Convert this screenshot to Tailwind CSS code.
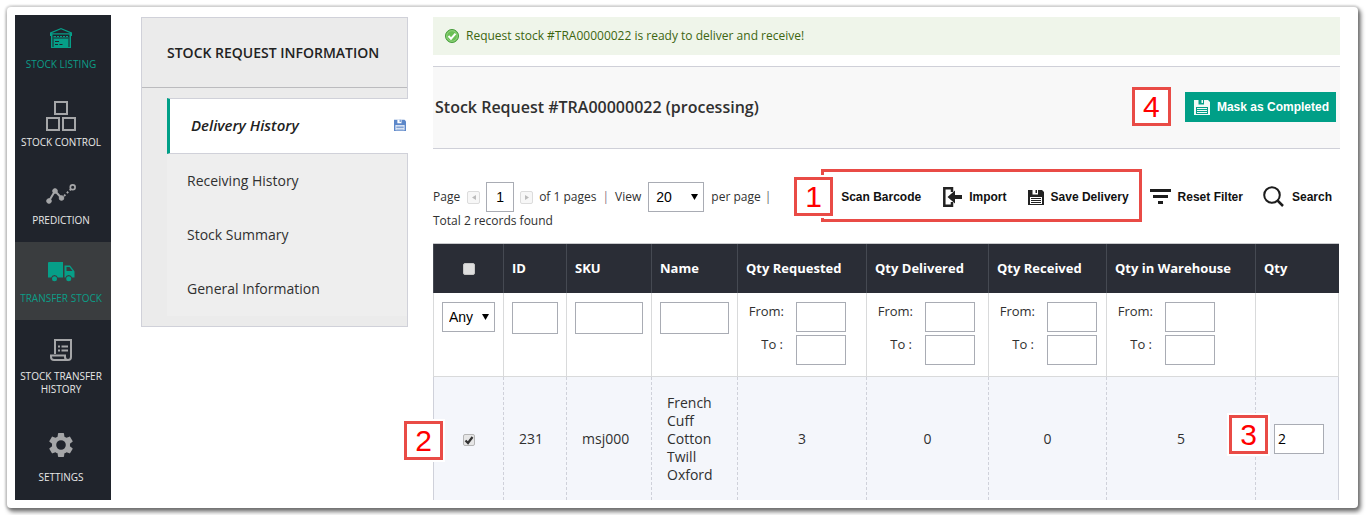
<!DOCTYPE html>
<html lang="en">
<head>
<meta charset="utf-8">
<title>Stock Request #TRA00000022</title>
<script src="https://cdn.jsdelivr.net/npm/@tailwindcss/browser@4"></script>
</head>
<body class="bg-white font-['Open_Sans',sans-serif] text-[#303030]">
<svg class="hidden">
  <symbol id="floppy" viewBox="0 0 16 16">
    <path fill="currentColor" d="M0 1h14l2 2v13H0z"/>
    <path class="text-(--paper)" fill="currentColor" d="M4.500 1H10v4.500H4.500z M2 8h12v7H2z"/>
    <path fill="currentColor" d="M7.500 1h1.500v3H7.500z M3 9h10v1H3z M3 11h10v1H3z M3 13h10v1H3z"/>
  </symbol>
</svg>
<div class="m-[7px] mr-[13px] flex rounded-[4px] bg-white p-2 shadow-[2px_3px_4px_1px_rgba(0,0,0,0.5),0_0_2px_2px_rgba(0,0,0,0.13)]">

  <nav class="w-24 shrink-0 bg-[#20242c] pr-1 text-center text-[10px] leading-[13px] text-[#e8e8e8]">
    <a href="#" class="flex h-[71px] flex-col items-center pt-[13px] text-[#0c9d87]">
      <svg class="h-5 w-[22px]" viewBox="0 0 22 20"><path fill="#069f88" d="M11 0 22 4.500V8h-1v12H1V8H0V4.500z"/><path fill="#20242c" d="M11 1.300 20.500 5.300H1.500z M2.500 6.500h17v12.500h-1V8H3.500V19h-1z"/><path stroke="#20242c" stroke-dasharray="1 2" d="M6 8.500h13"/><path stroke="#20242c" d="M3.500 10h15M5 13.500h3M5 16.500h3M9.500 16.500h3M8 13.500h1"/></svg>
      <span class="mt-[10px]">STOCK LISTING</span>
    </a>
    <a href="#" class="flex h-[78px] flex-col items-center pt-[15px]">
      <svg class="h-[30px] w-[30px]" viewBox="0 0 30 30" fill="none" stroke="#a5a6a8" stroke-width="2"><path d="M9 1h12v12H9zM1 17h12v12H1zM17 17h12v12H17z"/></svg>
      <span class="mt-[5px]">STOCK CONTROL</span>
    </a>
    <a href="#" class="flex h-[78px] flex-col items-center pt-5">
      <svg class="h-[20px] w-[30px]" viewBox="0 0 30 20" fill="#a5a6a8" stroke="#a5a6a8"><path fill="none" stroke-width="2" d="m3 17 6-10 6.500 7"/><path fill="none" stroke-width="1.800" stroke-dasharray="2 2" d="m18 12 7-7"/><circle cx="3" cy="17" r="2.300"/><circle cx="9" cy="7" r="2.300"/><circle cx="15.500" cy="14" r="2.300"/><circle cx="26.700" cy="3.300" r="2.400" fill="none" stroke-width="1.700"/></svg>
      <span class="mt-[10px]">PREDICTION</span>
    </a>
    <a href="#" class="-mr-1 flex h-[78px] flex-col items-center bg-[#3a3d3f] pt-5 pr-1 text-[#0c9d87]">
      <svg class="h-5 w-[27px]" viewBox="0 0 27 20"><path fill="#069f88" fill-rule="evenodd" d="M1 0h14v15.500H9.800a3.400 3.400 0 0 0-6.600 0H0V1a1 1 0 0 1 1-1z M16.500 3.500h5.500L25.500 8l1 1.500v6H24a3.400 3.400 0 0 0-6.600 0h-.9z M18.500 5v4h6L21.500 5z"/><circle cx="6.500" cy="16.700" r="2.500" fill="#069f88"/><circle cx="20.700" cy="16.700" r="2.500" fill="#069f88"/></svg>
      <span class="mt-[10px]">TRANSFER STOCK</span>
    </a>
    <a href="#" class="flex h-[91px] flex-col items-center pt-[19px]">
      <svg class="h-[22px] w-[22px]" viewBox="0 0 22 22" fill="none" stroke="#a5a6a8" stroke-width="2"><path d="M5 15V1h16v17a3 3 0 0 1-3 3H4a3 3 0 0 1-3-3v-1.500h14V18a3 3 0 0 0 3 3"/><path d="M8 7.500h2M11.500 7.500H18M8 11.500h2M11.500 11.500H18"/></svg>
      <span class="mt-[9px]">STOCK TRANSFER HISTORY</span>
    </a>
    <a href="#" class="flex h-[84px] flex-col items-center pt-[22px]">
      <svg class="h-6 w-6" viewBox="2 2 20 20"><path fill="#a5a6a8" d="M19.430 12.980c.04-.32.070-.64.070-.98s-.03-.66-.07-.98l2.110-1.650c.19-.15.240-.42.120-.64l-2-3.460c-.12-.22-.39-.3-.61-.22l-2.490 1c-.52-.4-1.080-.73-1.690-.98l-.38-2.650A.49.49 0 0 0 14 2h-4c-.25 0-.46.180-.49.420l-.38 2.650c-.61.250-1.170.59-1.690.98l-2.490-1c-.23-.09-.49 0-.61.220l-2 3.460c-.13.220-.07.490.12.640l2.110 1.650c-.04.320-.07.650-.07.980s.03.660.070.980l-2.110 1.650c-.19.150-.24.420-.12.640l2 3.460c.12.220.39.300.61.220l2.490-1c.52.400 1.080.73 1.690.98l.38 2.650c.03.240.24.420.49.420h4c.25 0 .46-.18.490-.42l.38-2.650c.61-.25 1.170-.59 1.690-.98l2.490 1c.23.090.49 0 .61-.22l2-3.460c.12-.22.070-.49-.12-.64zM12 16a4 4 0 1 1 0-8 4 4 0 0 1 0 8z"/></svg>
      <span class="mt-[14px]">SETTINGS</span>
    </a>
  </nav>

  <aside class="mt-[2px] ml-[30px] w-[267px] shrink-0 self-start border border-[#d0d1d9] bg-[#ebebeb] pb-[10px]">
    <h2 class="flex h-[70px] items-center border-b border-[#bbbbbe] pl-[25px] text-[14px] font-semibold whitespace-nowrap text-[#222]">STOCK REQUEST INFORMATION</h2>
    <ul class="mt-[10px] ml-[25px] bg-[#eee] text-[14px]">
      <li class="-mr-px"><a href="#" class="flex h-14 items-center justify-between border-y border-l-[3px] border-y-[#d0d1d9] border-l-[#009f87] bg-white pb-[2px] pl-[21px] text-[15px] font-semibold text-[#222] italic">Delivery History <svg class="mr-[2px] h-3 w-3 text-[#5c87c9] [--paper:#fff]"><use href="#floppy"/></svg></a></li>
      <li><a href="#" class="flex h-[54px] items-center pb-[2px] pl-5">Receiving History</a></li>
      <li><a href="#" class="flex h-[54px] items-center pb-[2px] pl-5">Stock Summary</a></li>
      <li><a href="#" class="flex h-[54px] items-center pb-[2px] pl-5">General Information</a></li>
    </ul>
  </aside>

  <main class="mt-[2px] mr-[10px] ml-[25px] min-w-0 flex-1">
    <p class="flex h-[38px] items-center bg-[#eff5ea] pl-3 text-[12px] text-[#3d6611]">
      <svg class="mr-[7px] h-[14px] w-[14px]" viewBox="0 0 14 14"><circle cx="7" cy="7" r="6.500" fill="#6abf55" stroke="#469b3b"/><circle cx="7" cy="7" r="5.300" fill="none" stroke="#9ad889" stroke-width=".8"/><path d="m3.500 7 2.500 2.700 4.500-5" fill="none" stroke="#fff" stroke-width="2"/></svg>
      Request stock #TRA00000022 is ready to deliver and receive!
    </p>

    <header class="mt-[11px] flex h-[83px] items-center border-y border-[#cfd0d8] bg-[#f8f8f8] pr-1 pb-[2px] pl-[2px]">
      <h1 class="flex-1 text-[16px] font-semibold">Stock Request #TRA00000022 (processing)</h1>
      <span class="mr-[14px] flex h-[39px] w-[39px] items-center justify-center border-3 border-[#e94b46] bg-white font-['Liberation_Sans',sans-serif] text-[30px] leading-none text-[#f00]">4</span>
      <button class="flex h-[30px] items-center bg-[#009f87] pr-[7px] pl-[9px] font-['Liberation_Sans',sans-serif] text-[12px] font-bold text-white"><svg class="mr-[7px] h-4 w-4 text-[#f0faf6] [--paper:#009f87]"><use href="#floppy"/></svg>Mask as Completed</button>
    </header>

    <div class="mt-5 flex items-start">
      <div class="flex-1 pt-[13px] text-[12px] whitespace-nowrap">
        <div class="flex items-center">
          <label for="page">Page</label>
          <button aria-label="Previous page" class="ml-[7px] flex h-[13px] w-[13px] items-center justify-center rounded-[2px] border border-[#dcdcdc] bg-[#f7f7f7]"><svg class="h-[5px] w-1" viewBox="0 0 4 5"><path fill="#bbb" d="M4 0v5L0 2.500z"/></svg></button>
          <input id="page" value="1" class="mx-[6px] h-[30px] w-7 border border-[#a9acb4] bg-white text-center font-['Liberation_Sans',sans-serif] text-[14px] text-black">
          <button aria-label="Next page" class="mr-[6px] flex h-[13px] w-[13px] items-center justify-center rounded-[2px] border border-[#dcdcdc] bg-[#f7f7f7]"><svg class="h-[5px] w-1" viewBox="0 0 4 5"><path fill="#bbb" d="M0 0v5L4 2.500z"/></svg></button>
          <span>of 1 pages</span><span class="mx-[6px] text-[#8a7480]">|</span>
          <label for="view">View</label>
          <span class="relative mx-[7px]"><select id="view" class="h-[30px] w-14 appearance-none border border-[#a9acb4] bg-white pl-[7px] font-['Liberation_Sans',sans-serif] text-[14px] text-black"><option>20</option></select><svg class="pointer-events-none absolute top-[12px] right-[6px] h-[6px] w-[7px]" viewBox="0 0 7 6"><path d="M0 0h7L3.500 6z"/></svg></span>
          <span>per page</span><span class="ml-1 text-[#666]">|</span>
        </div>
        <p class="leading-[18px]">Total 2 records found</p>
      </div>

      <div class="flex items-center font-['Liberation_Sans',sans-serif] text-[12px] font-bold whitespace-nowrap text-[#111]">
        <div class="relative flex h-[53px] items-center border-3 border-[#e94b46] pt-[2px] pr-[10px] pl-[17px]">
          <span class="absolute top-[5px] -left-[30px] flex h-[39px] w-[39px] items-center justify-center border-3 border-[#e94b46] bg-white text-[30px] leading-none font-normal text-[#f00] shadow-[0_0_0_2px_#fff]">1</span>
          <button>Scan Barcode</button>
          <button class="ml-[22px] flex items-center"><svg class="mr-[7px] h-5 w-[19px]" viewBox="0 0 19 20"><path fill="none" stroke="#222" stroke-width="2.500" d="M9 5V1.300H1.300v17.400H9V15" /><path fill="#222" d="M4.500 10 12 3.500V8h7v4h-7v4.500z"/></svg>Import</button>
          <button class="ml-[21px] flex items-center"><svg class="mr-[7px] h-4 w-4 text-[#222] [--paper:#fff]"><use href="#floppy"/></svg>Save Delivery</button>
        </div>
        <button class="ml-2 flex items-center pt-[2px]"><svg class="mr-[7px] h-[15px] w-[21px]" viewBox="0 0 21 15"><path fill="#1c1c1c" d="M0 0h21v3H0zM3 6h15v3H3zM8 12h5v3H8z"/></svg>Reset Filter</button>
        <button class="mr-2 ml-5 flex items-center pt-[2px]"><svg class="mr-2 h-[21px] w-[21px]" viewBox="0 0 21 21" fill="none" stroke="#1c1c1c"><circle cx="9" cy="9" r="7.800" stroke-width="2"/><path stroke-width="2.500" d="m14.500 14.500 5.500 5.500"/></svg>Search</button>
      </div>
    </div>

    <div class="mt-[13px] pr-px">
    <table class="w-full table-fixed border-separate border-spacing-0 border-t border-[#c9cacd] text-left">
      <colgroup><col class="w-[70px]"><col class="w-[63px]"><col class="w-[85px]"><col class="w-[86px]"><col class="w-[129px]"><col class="w-[122px]"><col class="w-[118px]"><col class="w-[149px]"><col class="w-[84px]"></colgroup>
      <thead class="bg-[#2a2d36] text-[13px] whitespace-nowrap text-white">
        <tr class="*:h-[49px] *:border-l *:border-[#454952] *:pl-2">
          <th class="pr-2 text-center"><input type="checkbox" aria-label="Select all" class="inline-block h-3 w-3 appearance-none rounded-[2px] border border-[#c5c5c5] bg-[#dedede] align-middle"></th>
          <th>ID</th><th>SKU</th><th>Name</th><th>Qty Requested</th><th>Qty Delivered</th><th>Qty Received</th><th>Qty in Warehouse</th><th>Qty</th>
        </tr>
      </thead>
      <tbody>
        <tr class="*:h-[84px] *:border-b *:border-l *:border-[#d9dadb] *:px-2 *:pt-[9px] *:align-top">
          <td><span class="relative block"><select aria-label="Filter by selection" class="h-[30px] w-full appearance-none border border-[#a9acb4] bg-white pl-[6px] font-['Liberation_Sans',sans-serif] text-[14px] text-black"><option>Any</option></select><svg class="pointer-events-none absolute top-[12px] right-[6px] h-[6px] w-[7px]" viewBox="0 0 7 6"><path d="M0 0h7L3.500 6z"/></svg></span></td>
          <td><input aria-label="Filter by ID" class="block h-8 w-full border border-[#a9acb4] bg-white px-1"></td>
          <td><input aria-label="Filter by SKU" class="block h-8 w-full border border-[#a9acb4] bg-white px-1"></td>
          <td><input aria-label="Filter by name" class="block h-8 w-full border border-[#a9acb4] bg-white px-1"></td>
          <td>
            <label class="flex text-[13px] leading-[18px]"><span class="w-[38px] text-right">From:</span><input class="ml-3 h-[30px] w-[50px] border border-[#a9acb4] bg-white px-1"></label>
            <label class="mt-[3px] flex text-[13px] leading-[18px]"><span class="w-[37px] text-right">To :</span><input class="ml-[13px] h-[30px] w-[50px] border border-[#a9acb4] bg-white px-1"></label>
          </td>
          <td>
            <label class="flex text-[13px] leading-[18px]"><span class="w-[38px] text-right">From:</span><input class="ml-3 h-[30px] w-[50px] border border-[#a9acb4] bg-white px-1"></label>
            <label class="mt-[3px] flex text-[13px] leading-[18px]"><span class="w-[37px] text-right">To :</span><input class="ml-[13px] h-[30px] w-[50px] border border-[#a9acb4] bg-white px-1"></label>
          </td>
          <td>
            <label class="flex text-[13px] leading-[18px]"><span class="w-[38px] text-right">From:</span><input class="ml-3 h-[30px] w-[50px] border border-[#a9acb4] bg-white px-1"></label>
            <label class="mt-[3px] flex text-[13px] leading-[18px]"><span class="w-[37px] text-right">To :</span><input class="ml-[13px] h-[30px] w-[50px] border border-[#a9acb4] bg-white px-1"></label>
          </td>
          <td>
            <label class="flex text-[13px] leading-[18px]"><span class="w-[38px] text-right">From:</span><input class="ml-3 h-[30px] w-[50px] border border-[#a9acb4] bg-white px-1"></label>
            <label class="mt-[3px] flex text-[13px] leading-[18px]"><span class="w-[37px] text-right">To :</span><input class="ml-[13px] h-[30px] w-[50px] border border-[#a9acb4] bg-white px-1"></label>
          </td>
          <td class="border-r"></td>
        </tr>
        <tr class="bg-[#f4f6fb] text-[14px] leading-[18px] *:h-[123px] *:border-[#cfd1da]">
          <td class="relative border-l text-center">
            <span class="relative inline-block h-3 w-3 align-middle"><input type="checkbox" checked aria-label="Select product 231" class="block h-3 w-3 appearance-none rounded-[2px] border border-[#b5b5b5] bg-[#e6e6e6]"><svg class="pointer-events-none absolute inset-0 h-3 w-3" viewBox="0 0 12 12"><path d="m2.500 6.500 2.500 2.500 4.500-6" fill="none" stroke="#333" stroke-width="2.200"/></svg></span>
            <span class="absolute top-[44px] -left-[30px] flex h-[39px] w-[39px] items-center justify-center border-3 border-[#e94b46] bg-white font-['Liberation_Sans',sans-serif] text-[30px] leading-none text-[#f00] shadow-[0_0_0_2px_#fff]">2</span>
          </td>
          <td class="border-l border-dashed pl-[15px]">231</td>
          <td class="border-l border-dashed pl-[15px]">msj000</td>
          <td class="border-l border-dashed px-[15px]">French Cuff Cotton Twill Oxford</td>
          <td class="border-l border-dashed text-center">3</td>
          <td class="border-l border-dashed text-center">0</td>
          <td class="border-l border-dashed text-center">0</td>
          <td class="border-l border-dashed text-center">5</td>
          <td class="relative border-x border-l-[#cfd1da] [border-left-style:dashed] pl-[18px]">
            <input aria-label="Quantity" value="2" class="block h-[30px] w-[50px] border border-[#a9acb4] bg-white px-[3px] text-black">
            <span class="absolute top-[38px] -left-[27px] flex h-[39px] w-[39px] items-center justify-center border-3 border-[#e94b46] bg-white font-['Liberation_Sans',sans-serif] text-[30px] leading-none text-[#f00] shadow-[0_0_0_2px_#fff]">3</span>
          </td>
        </tr>
      </tbody>
    </table>
    </div>
  </main>
</div>
</body>
</html>
